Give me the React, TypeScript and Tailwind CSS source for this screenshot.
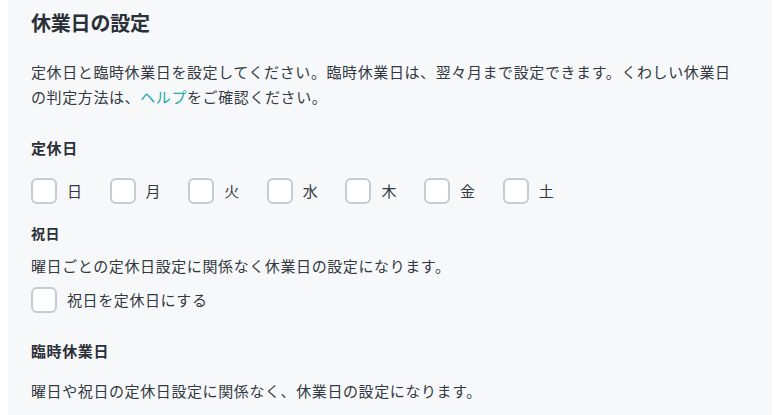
import React from "react";

const font = { fontFamily: '"Noto Sans CJK JP", "Noto Sans", sans-serif' };

function Box() {
  return (
    <span className="inline-block w-[26px] h-[26px] shrink-0 rounded-[6px] border-2 border-[#c6cbd4] bg-white" />
  );
}

export default function App() {
  const days = ["日", "月", "火", "水", "木", "金", "土"];
  return (
    <div className="w-[775px] h-[415px] bg-white overflow-hidden" style={font}>
      <div className="ml-[8px] mr-[3px] h-full bg-[#f7f8fa] pl-[23px] text-[#333841] tracking-[0.6px]">
        <h1 className="pt-[9px] text-[20px] leading-[28px] font-bold tracking-[-0.2px] text-[#2b2f38]">休業日の設定</h1>
        <p className="mt-[22px] text-[15px] leading-[25px]">
          定休日と臨時休業日を設定してください。臨時休業日は、翌々月まで設定できます。くわしい休業日
          <br />
          の判定方法は、<span className="text-[#26a9a9]">ヘルプ</span>をご確認ください。
        </p>
        <h2 className="mt-[28px] text-[15px] leading-[22px] font-bold text-[#2b2f38]">定休日</h2>
        <div className="mt-[19px] flex gap-[27px]">
          {days.map((d) => (
            <label key={d} className="flex items-center gap-[10px] text-[15px] leading-[26px]">
              <Box />
              <span>{d}</span>
            </label>
          ))}
        </div>
        <h3 className="mt-[19px] text-[14px] leading-[20px] font-bold text-[#2b2f38]">祝日</h3>
        <p className="mt-[12px] text-[15px] leading-[22px]">曜日ごとの定休日設定に関係なく休業日の設定になります。</p>
        <label className="mt-[10px] flex items-center gap-[10px] text-[15px] leading-[26px]">
          <Box />
          <span>祝日を定休日にする</span>
        </label>
        <h2 className="mt-[27px] text-[15px] leading-[22px] font-bold text-[#2b2f38]">臨時休業日</h2>
        <p className="mt-[18px] text-[15px] leading-[22px]">曜日や祝日の定休日設定に関係なく、休業日の設定になります。</p>
      </div>
    </div>
  );
}
